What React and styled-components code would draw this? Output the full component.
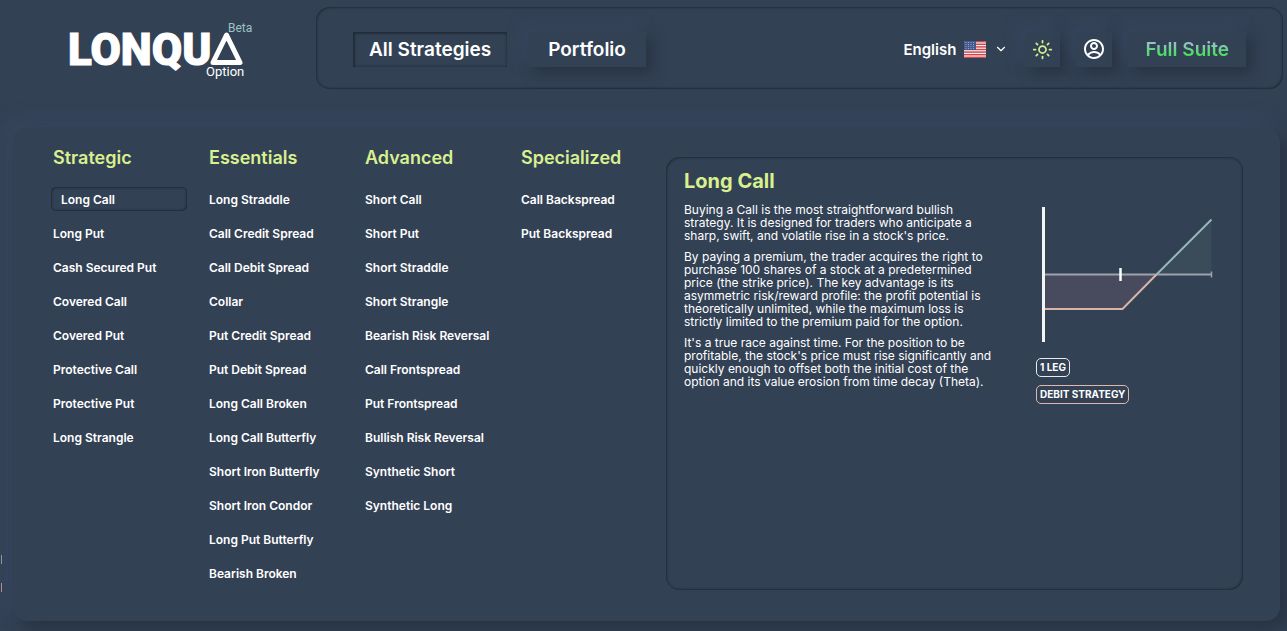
import { useState } from "react";
import styled, { createGlobalStyle } from "styled-components";
import { ChevronDown, Sun } from "lucide-react";
import { RiAccountCircleLine } from "react-icons/ri";

const GlobalStyles = createGlobalStyle`
  :root {
    --color-bg: #334155;
    --color-light: #38475f;
    --color-dark: #283341;
    --color-edge: #222c39;
    --color-lime: #d9f08f;
    --color-teal: #9cc4c4;
    --color-peach: #e0b8a8;
    --shadow-inset: inset 1px 1px 2px var(--color-edge),
      inset -1px -1px 2px var(--color-edge);
  }

  * {
    box-sizing: border-box;
    margin: 0;
    padding: 0;
  }

  body {
    background-color: var(--color-bg);
    color: #fff;
    font-family: Inter, "Liberation Sans", sans-serif;
    overflow: hidden;
  }

  button,
  select {
    font-family: inherit;
    color: inherit;
    background: none;
    border: none;
    cursor: pointer;
  }
`;

const Page = styled.div`
  position: relative;
  min-height: 100vh;
`;

const Header = styled.header`
  display: flex;
  padding: 7px 4px 0 0;
`;

const LogoLink = styled.a`
  flex: 0 0 316px;
  padding: 12px 0 0 64px;
`;

const NavBar = styled.nav`
  flex: 1;
  display: flex;
  align-items: center;
  justify-content: space-between;
  height: 82px;
  padding: 2px 37px 0;
  border-radius: 14px;
  box-shadow: var(--shadow-inset);
`;

const NavGroup = styled.div`
  display: flex;
  align-items: center;
  gap: ${(props) => props.$gap}px;
`;

const NavButton = styled.button`
  height: 35px;
  padding: 0 ${(props) => props.$pad}px;
  display: flex;
  align-items: center;
  font-size: 19px;
  font-weight: 600;
  background-color: var(--color-bg);
  box-shadow: ${(props) =>
    props.$active
      ? "inset 2px 2px 2px var(--color-edge), inset -1px -1px 2px var(--color-dark)"
      : "6px 6px 14px var(--color-dark), -6px -6px 14px var(--color-light)"};
`;

const GradientText = styled.span`
  background: linear-gradient(#a9b8e0 10%, #44e358 75%);
  background-clip: text;
  color: transparent;
`;

const Language = styled.label`
  display: flex;
  align-items: center;
  gap: 8px;
  margin-right: 1px;
`;

const LanguageSelect = styled.select`
  appearance: none;
  field-sizing: content;
  font-size: 15px;
  font-weight: 600;
`;

const Panel = styled.main`
  display: grid;
  grid-template-columns: 604fr 577fr;
  gap: 11px;
  margin: 39px 7px 10px 13px;
  padding: 20px 37px 31px 38px;
  border-radius: 14px;
  background-color: var(--color-bg);
  box-shadow: 8px 8px 16px var(--color-dark), -8px -8px 16px var(--color-light);
`;

const Menus = styled.div`
  display: grid;
  grid-template-columns: repeat(4, 1fr);
  gap: 20px;
`;

const MenuTitle = styled.h2`
  margin-bottom: 19px;
  padding-left: 2px;
  font-size: 18px;
  font-weight: 600;
  line-height: 20px;
  color: var(--color-lime);
`;

const MenuList = styled.ul`
  display: grid;
  gap: 10px;
  padding-bottom: 5px;
  list-style: none;
`;

const MenuItem = styled.button`
  display: block;
  width: 100%;
  height: 24px;
  padding-left: ${(props) => (props.$active ? 10 : 2)}px;
  border-radius: 5px;
  font-size: 12px;
  font-weight: 600;
  text-align: left;
  white-space: nowrap;
  box-shadow: ${(props) => (props.$active ? "var(--shadow-inset)" : "none")};
`;

const Card = styled.section`
  display: grid;
  grid-template-columns: 311fr 190fr;
  gap: 41px;
  margin-top: 9px;
  padding: 14px 17px 14px 18px;
  border-radius: 14px;
  box-shadow: var(--shadow-inset);
`;

const CardTitle = styled.h1`
  margin-bottom: 12px;
  font-size: 20px;
  font-weight: 700;
  line-height: 20px;
  color: var(--color-lime);
`;

const Text = styled.p`
  margin-bottom: 8px;
  font-size: 12px;
  line-height: 13px;
`;

const Figure = styled.div`
  display: flex;
  flex-direction: column;
  align-items: flex-start;
  gap: 8px;
  padding-top: 34px;
`;

const Chart = styled.svg`
  width: 100%;
  margin-bottom: 6px;
`;

const Tag = styled.span`
  height: 19px;
  padding: 0 3px;
  border: 1px solid ${(props) => props.$color};
  border-radius: 5px;
  font-size: 10px;
  font-weight: 700;
  line-height: 17px;
`;

// edges of the tags of the page that lies under the menu
const Behind = styled.div`
  position: absolute;
  left: 0;
  top: 555px;
  display: grid;
  gap: 19px;
`;

const TagEdge = styled.span`
  width: 2px;
  height: 9px;
  border-right: 1px solid ${(props) => props.$color};
`;

const menus = [
  {
    title: "Strategic",
    items: [
      "Long Call",
      "Long Put",
      "Cash Secured Put",
      "Covered Call",
      "Covered Put",
      "Protective Call",
      "Protective Put",
      "Long Strangle",
    ],
  },
  {
    title: "Essentials",
    items: [
      "Long Straddle",
      "Call Credit Spread",
      "Call Debit Spread",
      "Collar",
      "Put Credit Spread",
      "Put Debit Spread",
      "Long Call Broken",
      "Long Call Butterfly",
      "Short Iron Butterfly",
      "Short Iron Condor",
      "Long Put Butterfly",
      "Bearish Broken",
    ],
  },
  {
    title: "Advanced",
    items: [
      "Short Call",
      "Short Put",
      "Short Straddle",
      "Short Strangle",
      "Bearish Risk Reversal",
      "Call Frontspread",
      "Put Frontspread",
      "Bullish Risk Reversal",
      "Synthetic Short",
      "Synthetic Long",
    ],
  },
  {
    title: "Specialized",
    items: ["Call Backspread", "Put Backspread"],
  },
];

function Logo() {
  return (
    <svg width="200" height="64" viewBox="64 19 200 64" fill="#fff">
      <text
        x="68"
        y="65"
        fontFamily="Roboto, sans-serif"
        fontSize="44"
        fontWeight="900"
        stroke="#fff"
        strokeWidth="1"
      >
        LONQU
      </text>
      <path
        d="M226.5 35 L240 62.5 H213 Z"
        fill="none"
        stroke="#fff"
        strokeWidth="5"
        strokeLinejoin="round"
      />
      <text
        x="228"
        y="32"
        fill="#9cc4c4"
        fontFamily="Roboto, sans-serif"
        fontSize="12"
      >
        Beta
      </text>
      <text x="206" y="76" fontFamily="Roboto, sans-serif" fontSize="13">
        Option
      </text>
    </svg>
  );
}

function Flag() {
  return (
    <svg width="22" height="17" viewBox="0 0 22 17">
      <clipPath id="flag">
        <rect width="22" height="17" rx="2" />
      </clipPath>
      <g clipPath="url(#flag)">
        <rect width="22" height="17" fill="#f3eeee" />
        {[0, 1, 2, 3, 4, 5, 6].map((i) => (
          <rect key={i} y={i * 2.6} width="22" height="1.4" fill="#d0454c" />
        ))}
        <rect width="12" height="9" fill="#46598f" />
        {[1.5, 3.5, 5.5, 7.5].map((y) =>
          [2, 4.5, 7, 9.5].map((x) => (
            <circle key={`${x}-${y}`} cx={x} cy={y} r="0.5" fill="#aeb9d6" />
          ))
        )}
      </g>
    </svg>
  );
}

function PayoffChart() {
  return (
    <Chart viewBox="1036 205 190 139" fill="none">
      <path d="M1044 274.5 H1156.5 L1122.5 309 H1044 Z" fill="#484a5e" />
      <path d="M1157 274.5 L1211.5 220 V274.5 Z" fill="#3a4b59" />
      <path d="M1044 274.5 H1212" stroke="#9ba3ae" strokeWidth="2" />
      <path d="M1211.5 271.5 V277.5" stroke="#9ba3ae" strokeWidth="1.5" />
      <path
        d="M1044 309 H1122.5 L1156.5 274.5"
        stroke="#d9b3a6"
        strokeWidth="2"
      />
      <path d="M1156.5 274.5 L1211.5 219.5" stroke="#94b8bb" strokeWidth="2" />
      <path d="M1120.5 268 V281" stroke="#fff" strokeWidth="2.5" />
      <path d="M1043.5 207 V342" stroke="#f4f4f4" strokeWidth="3" />
    </Chart>
  );
}

function App() {
  const [selected, setSelected] = useState("Long Call");

  return (
    <>
      <GlobalStyles />
      <Page>
        <Behind>
          <TagEdge $color="#8d96a3" />
          <TagEdge $color="#a5928f" />
        </Behind>
        <Header>
          <LogoLink href="#" aria-label="Lonqua Option">
            <Logo />
          </LogoLink>
          <NavBar>
            <NavGroup $gap={21}>
              <NavButton $pad={16} $active>
                All Strategies
              </NavButton>
              <NavButton $pad={20}>Portfolio</NavButton>
            </NavGroup>
            <NavGroup $gap={16}>
              <Language>
                <LanguageSelect aria-label="Language">
                  <option>English</option>
                </LanguageSelect>
                <Flag />
                <ChevronDown size={14} />
              </Language>
              <NavButton $pad={7} aria-label="Theme">
                <Sun size={21} color="#d9f08f" />
              </NavButton>
              <NavButton $pad={6} aria-label="Account">
                <RiAccountCircleLine size={24} />
              </NavButton>
              <NavButton $pad={17}>
                <GradientText>Full Suite</GradientText>
              </NavButton>
            </NavGroup>
          </NavBar>
        </Header>
        <Panel>
          <Menus>
            {menus.map((menu) => (
              <div key={menu.title}>
                <MenuTitle>{menu.title}</MenuTitle>
                <MenuList>
                  {menu.items.map((item) => (
                    <li key={item}>
                      <MenuItem
                        $active={item === selected}
                        onClick={() => setSelected(item)}
                      >
                        {item}
                      </MenuItem>
                    </li>
                  ))}
                </MenuList>
              </div>
            ))}
          </Menus>
          <Card>
            <div>
              <CardTitle>Long Call</CardTitle>
              <Text>
                Buying a Call is the most straightforward bullish strategy. It
                is designed for traders who anticipate a sharp, swift, and
                volatile rise in a stock's price.
              </Text>
              <Text>
                By paying a premium, the trader acquires the right to purchase
                100 shares of a stock at a predetermined price (the strike
                price). The key advantage is its asymmetric risk/reward profile:
                the profit potential is theoretically unlimited, while the
                maximum loss is strictly limited to the premium paid for the
                option.
              </Text>
              <Text>
                It's a true race against time. For the position to be
                profitable, the stock's price must rise significantly and
                quickly enough to offset both the initial cost of the option and
                its value erosion from time decay (Theta).
              </Text>
            </div>
            <Figure>
              <PayoffChart />
              <Tag $color="#e8eaee">1 LEG</Tag>
              <Tag $color="#e0b8a8">DEBIT STRATEGY</Tag>
            </Figure>
          </Card>
        </Panel>
      </Page>
    </>
  );
}

export default App;
